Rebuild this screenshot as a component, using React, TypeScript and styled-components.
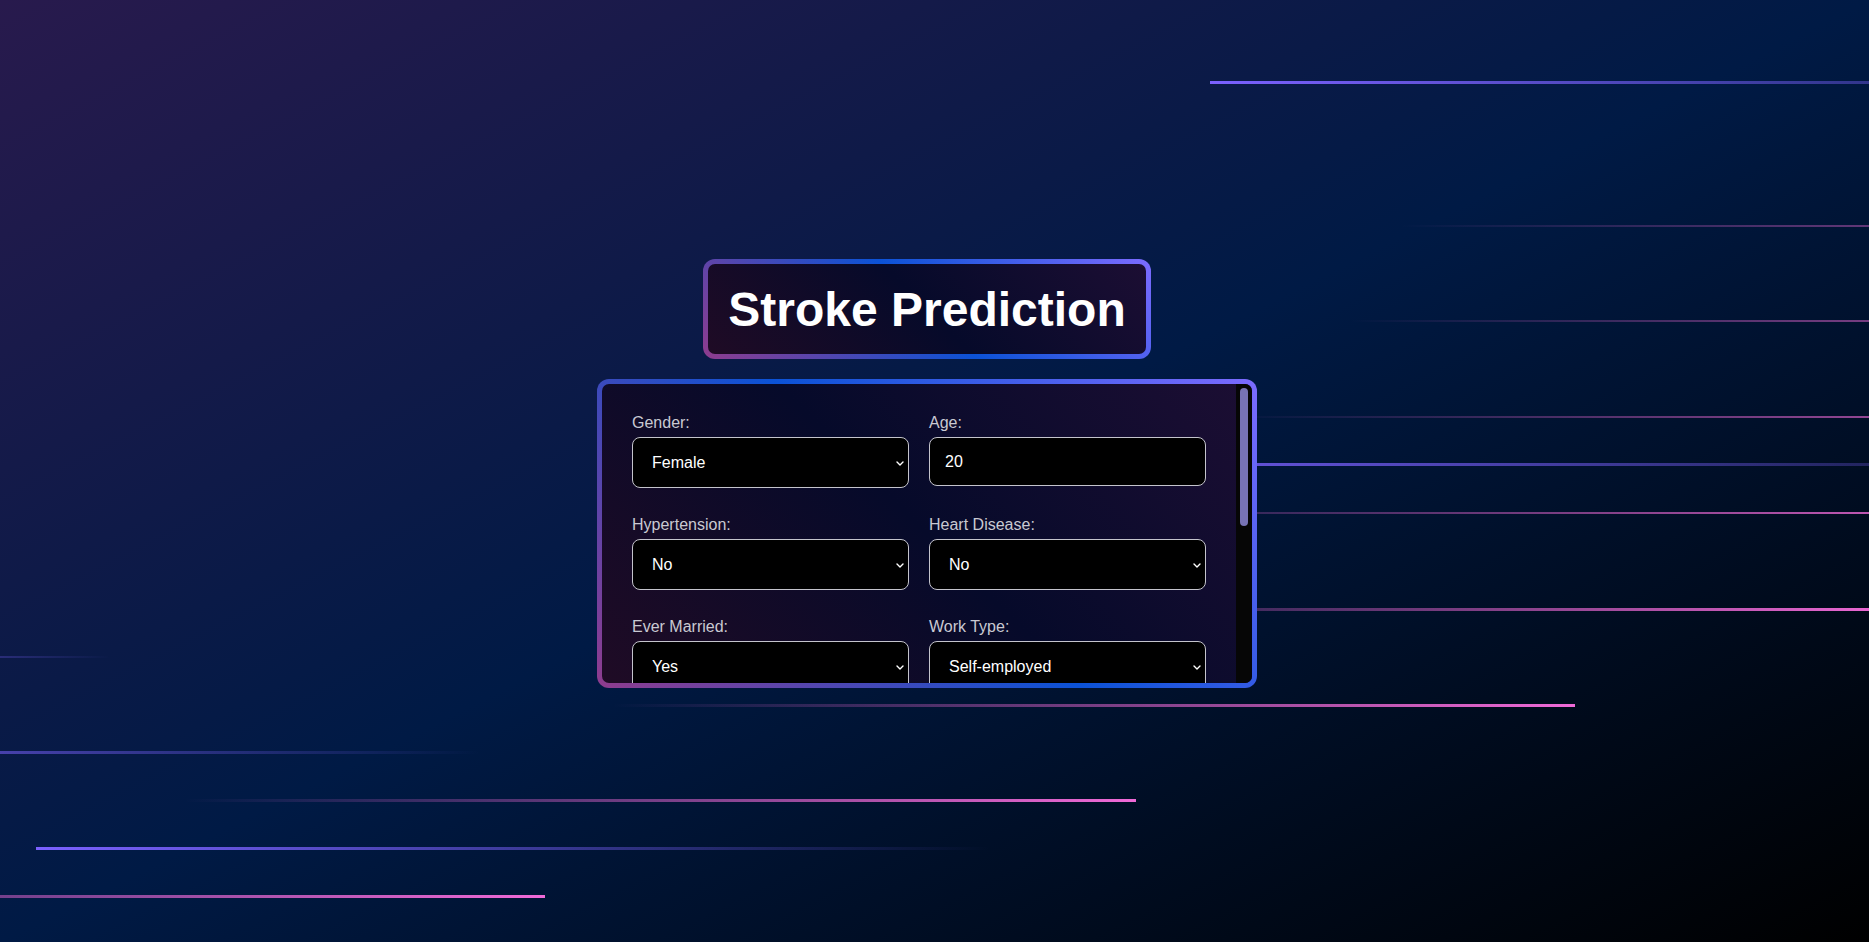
import React from "react";
import styled, { createGlobalStyle } from "styled-components";

const GlobalStyle = createGlobalStyle`
  html, body {
    margin: 0;
    padding: 0;
    height: 100%;
    overflow: hidden;
  }
  body {
    font-family: "Liberation Sans", Arial, sans-serif;
    background: #000;
  }
  * { box-sizing: border-box; }
`;

const BORDER_GRADIENT = "linear-gradient(45deg, #8f3c8e 0%, #0b52d6 50%, #7c6bff 100%)";
const INNER_GRADIENT = "linear-gradient(45deg, #1f0b25 0%, #060a2a 50%, #1c0e33 100%)";

const Page = styled.main`
  position: relative;
  width: 100vw;
  height: 100vh;
  overflow: hidden;
  background: linear-gradient(to bottom right, #281a4d 0%, #001a45 50%, #000000 100%);
  display: flex;
  flex-direction: column;
  align-items: center;
  justify-content: center;
  gap: 20px;
  padding: 5px 15px 0 0;
`;

const Backdrop = styled.div`
  position: absolute;
  inset: 0;
  pointer-events: none;
  z-index: 0;
`;

const Streak = styled.span<{ $top: number; $left: number; $width: number; $thick: number; $tone: "pink" | "purple" }>`
  position: absolute;
  top: ${(p) => p.$top}px;
  left: ${(p) => p.$left}px;
  width: ${(p) => p.$width}px;
  height: ${(p) => p.$thick}px;
  background: ${(p) =>
    p.$tone === "pink"
      ? "linear-gradient(90deg, rgba(240,106,216,0) 0%, #f06ad8 100%)"
      : "linear-gradient(90deg, #7b61ff 0%, rgba(123,97,255,0) 100%)"};
`;

const Frame = styled.div`
  position: relative;
  z-index: 1;
  padding: 5px;
  border-radius: 12px;
  background: ${BORDER_GRADIENT};
`;

const TitleInner = styled.div`
  height: 90px;
  padding: 0 20px;
  border-radius: 7px;
  background: ${INNER_GRADIENT};
  display: flex;
  align-items: center;
  justify-content: center;
`;

const Title = styled.h1`
  margin: 0;
  font-family: "Liberation Sans", Arial, sans-serif;
  font-weight: 700;
  font-size: 48px;
  line-height: 55px;
  color: #ffffff;
  white-space: nowrap;
`;

const CardBody = styled.div`
  display: flex;
  width: 650px;
  height: 299px;
  border-radius: 7px;
  overflow: hidden;
  background: ${INNER_GRADIENT};
`;

const Scroller = styled.div`
  flex: 1;
  min-width: 0;
  overflow-y: auto;
  scrollbar-width: none;
  &::-webkit-scrollbar {
    display: none;
  }
`;

const ScrollTrack = styled.div`
  flex: 0 0 16px;
  padding: 4px;
  background: #060606;
`;

const ScrollThumb = styled.div`
  width: 8px;
  height: 138px;
  border-radius: 4px;
  background: #7773b4;
`;

const Form = styled.form`
  display: grid;
  grid-template-columns: 277px 277px;
  column-gap: 20px;
  row-gap: 28px;
  align-items: start;
  padding: 30px;
`;

const Field = styled.div`
  display: flex;
  flex-direction: column;
`;

const Label = styled.label`
  display: block;
  font-size: 16px;
  line-height: 18px;
  color: #c9c9d2;
  margin-bottom: 5px;
`;

const SelectWrap = styled.div`
  position: relative;
`;

const Select = styled.select`
  appearance: none;
  -webkit-appearance: none;
  width: 100%;
  height: 51px;
  padding: 0 28px 0 19px;
  border: 1px solid #c4c4cc;
  border-radius: 8px;
  background: #000;
  color: #fff;
  font-family: "Liberation Sans", Arial, sans-serif;
  font-size: 16px;
  outline: none;
`;

const Chevron = styled.svg`
  position: absolute;
  right: 5px;
  top: 50%;
  width: 8px;
  height: 5px;
  margin-top: -2px;
  pointer-events: none;
`;

const Input = styled.input`
  width: 100%;
  height: 49px;
  padding: 0 15px;
  border: 1px solid #c4c4cc;
  border-radius: 8px;
  background: #000;
  color: #fff;
  font-family: "Liberation Sans", Arial, sans-serif;
  font-size: 16px;
  outline: none;
`;

const Submit = styled.button`
  grid-column: 1 / -1;
  height: 45px;
  border: none;
  border-radius: 8px;
  background: ${BORDER_GRADIENT};
  color: #fff;
  font-family: "Liberation Sans", Arial, sans-serif;
  font-size: 18px;
  font-weight: 700;
  cursor: pointer;
`;

type SelectField = { kind: "select"; label: string; id: string; options: string[] };
type InputField = { kind: "input"; label: string; id: string; value: string };

const fields: (SelectField | InputField)[] = [
  { kind: "select", label: "Gender:", id: "gender", options: ["Female", "Male", "Other"] },
  { kind: "input", label: "Age:", id: "age", value: "20" },
  { kind: "select", label: "Hypertension:", id: "hypertension", options: ["No", "Yes"] },
  { kind: "select", label: "Heart Disease:", id: "heart", options: ["No", "Yes"] },
  { kind: "select", label: "Ever Married:", id: "married", options: ["Yes", "No"] },
  { kind: "select", label: "Work Type:", id: "work", options: ["Self-employed", "Private", "Govt_job", "children", "Never_worked"] },
  { kind: "select", label: "Residence Type:", id: "residence", options: ["Urban", "Rural"] },
  { kind: "input", label: "Avg Glucose Level:", id: "glucose", value: "" },
  { kind: "input", label: "BMI:", id: "bmi", value: "" },
  { kind: "select", label: "Smoking Status:", id: "smoking", options: ["never smoked", "formerly smoked", "smokes", "Unknown"] },
];

const streaks: { top: number; left: number; width: number; thick: number; tone: "pink" | "purple" }[] = [
  { top: 81, left: 1210, width: 1100, thick: 3, tone: "purple" },
  { top: 225, left: 1400, width: 1150, thick: 2, tone: "pink" },
  { top: 320, left: 1350, width: 1050, thick: 2, tone: "pink" },
  { top: 416, left: 1230, width: 1050, thick: 2, tone: "pink" },
  { top: 463, left: 1000, width: 1200, thick: 3, tone: "purple" },
  { top: 512, left: 1000, width: 1100, thick: 2, tone: "pink" },
  { top: 608, left: 1000, width: 900, thick: 3, tone: "pink" },
  { top: 656, left: -300, width: 410, thick: 2, tone: "purple" },
  { top: 704, left: 612, width: 963, thick: 3, tone: "pink" },
  { top: 751, left: -400, width: 880, thick: 3, tone: "purple" },
  { top: 799, left: 184, width: 952, thick: 3, tone: "pink" },
  { top: 847, left: 36, width: 954, thick: 3, tone: "purple" },
  { top: 895, left: -500, width: 1045, thick: 3, tone: "pink" },
];

export default function App() {
  return (
    <>
      <GlobalStyle />
      <Page>
        <Backdrop>
          {streaks.map((s, i) => (
            <Streak key={i} $top={s.top} $left={s.left} $width={s.width} $thick={s.thick} $tone={s.tone} />
          ))}
        </Backdrop>
        <Frame>
          <TitleInner>
            <Title>Stroke Prediction</Title>
          </TitleInner>
        </Frame>
        <Frame>
          <CardBody>
            <Scroller>
              <Form onSubmit={(e) => e.preventDefault()}>
                {fields.map((f) => (
                  <Field key={f.id}>
                    <Label htmlFor={f.id}>{f.label}</Label>
                    {f.kind === "select" ? (
                      <SelectWrap>
                        <Select id={f.id} defaultValue={f.options[0]}>
                          {f.options.map((o) => (
                            <option key={o} value={o}>
                              {o}
                            </option>
                          ))}
                        </Select>
                        <Chevron viewBox="0 0 8 5" fill="none">
                          <path d="M1 1 L4 4 L7 1" stroke="#ffffff" strokeWidth="1.4" strokeLinecap="round" strokeLinejoin="round" />
                        </Chevron>
                      </SelectWrap>
                    ) : (
                      <Input id={f.id} type="text" inputMode="decimal" defaultValue={f.value} />
                    )}
                  </Field>
                ))}
                <Submit type="submit">Predict</Submit>
              </Form>
            </Scroller>
            <ScrollTrack>
              <ScrollThumb />
            </ScrollTrack>
          </CardBody>
        </Frame>
      </Page>
    </>
  );
}
